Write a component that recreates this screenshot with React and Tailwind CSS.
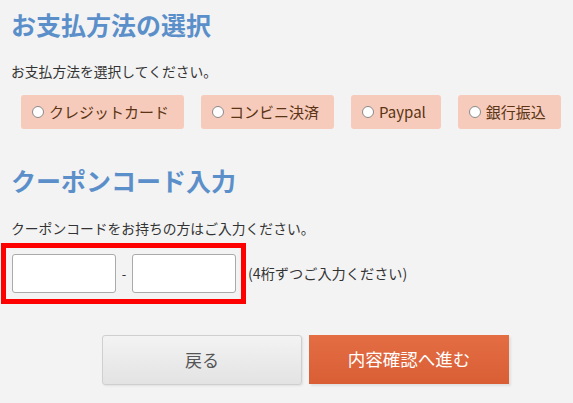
import { useState } from "react";

const methods = ["クレジットカード", "コンビニ決済", "Paypal", "銀行振込"];

function App() {
  const [method, setMethod] = useState(null);

  return (
    <div
      className="min-h-screen bg-[#f3f3f3] px-[11px] pt-[6px] text-[#333]"
      style={{ fontFamily: '"Noto Sans CJK JP", "Noto Sans", sans-serif' }}
    >
      {/* Payment method */}
      <h2 className="text-[25px] leading-[36px] font-bold text-[#5b8fca]">
        お支払方法の選択
      </h2>
      <p className="mt-[19px] text-[13.8px] leading-[20px]">
        お支払方法を選択してください。
      </p>
      <div className="mt-[14px] ml-[10px] flex gap-[17px]">
        {methods.map((m) => (
          <label
            key={m}
            className="flex h-[34px] cursor-pointer items-center gap-[5px] rounded-[3px] bg-[#f6cbbb] pl-[11px] pr-[15px] text-[15px] text-[#5a3414]"
            onClick={() => setMethod(m)}
          >
            <span className="flex h-[12px] w-[12px] items-center justify-center rounded-full border border-[#8a8a8a] bg-white">
              {method === m && (
                <span className="h-[6px] w-[6px] rounded-full bg-[#333]" />
              )}
            </span>
            {m}
          </label>
        ))}
      </div>

      {/* Coupon */}
      <h2 className="mt-[33px] text-[25px] leading-[36px] font-bold text-[#5b8fca]">
        クーポンコード入力
      </h2>
      <p className="mt-[20px] text-[13.8px] leading-[20px]">
        クーポンコードをお持ちの方はご入力ください。
      </p>
      <div className="mt-[5px] -ml-[10px] flex items-center">
        <div className="flex h-[61px] w-[245px] items-center border-[5px] border-[#ff0000] pl-[6px] pb-[1px]">
          <input className="h-[39px] w-[104px] rounded-[3px] border border-[#aaa] bg-white" />
          <span className="w-[16px] text-center text-[13px] leading-none">-</span>
          <input className="h-[39px] w-[104px] rounded-[3px] border border-[#aaa] bg-white" />
        </div>
        <span className="ml-[2px] text-[14.2px]">(4桁ずつご入力ください)</span>
      </div>

      {/* Buttons */}
      <div className="mt-[31px] ml-[91px] flex gap-[7px]">
        <button className="h-[50px] w-[200px] rounded-[3px] border border-[#cfcfcf] bg-gradient-to-b from-[#f3f3f3] to-[#e3e3e3] text-[17px] text-[#555] shadow-[1px_1px_2px_rgba(0,0,0,0.08)]">
          戻る
        </button>
        <button className="h-[49px] w-[200px] bg-gradient-to-b from-[#e46d44] to-[#d95e34] text-[17.5px] text-white shadow-[2px_2px_2px_rgba(0,0,0,0.08)]">
          内容確認へ進む
        </button>
      </div>
    </div>
  );
}

export default App;
